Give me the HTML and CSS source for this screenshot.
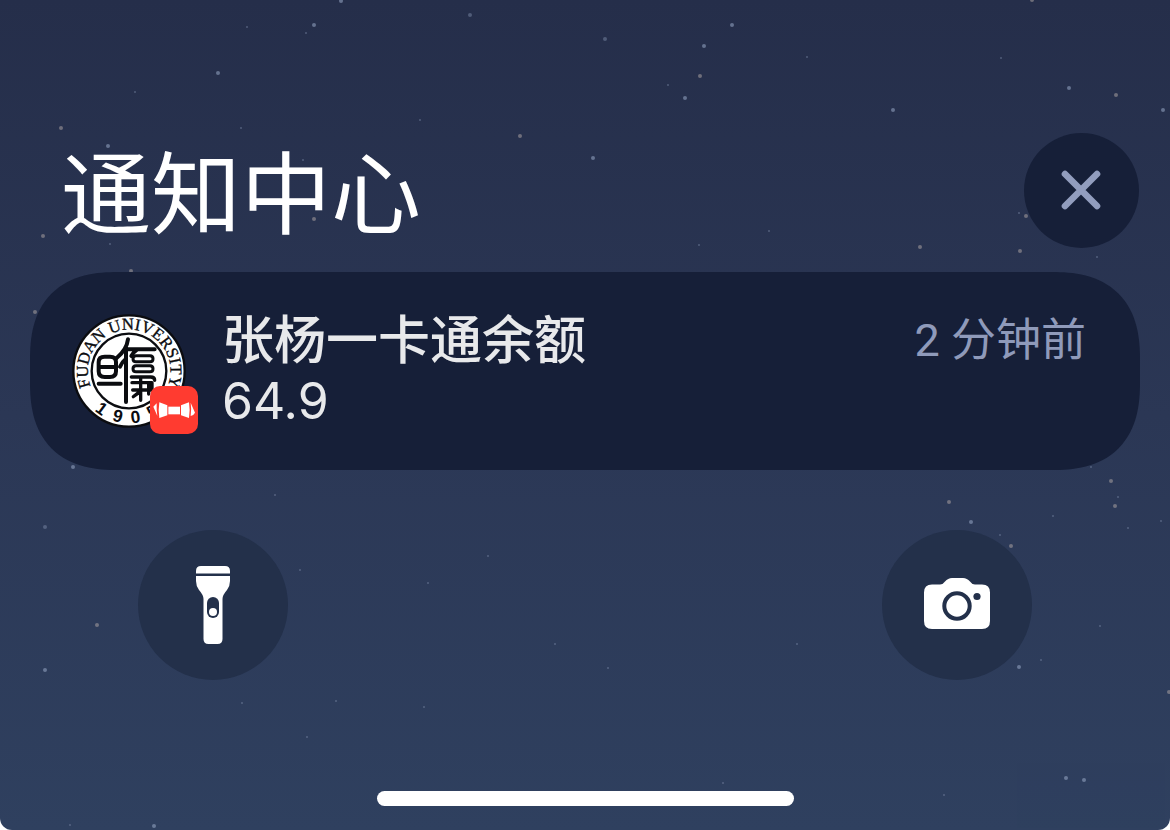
FILE: index.html
```html
<!DOCTYPE html>
<html lang="zh-CN">
<head>
<meta charset="utf-8">
<meta name="viewport" content="width=device-width, initial-scale=1">
<title>通知中心</title>
<link rel="stylesheet" href="styles.css">
</head>
<body>
<main class="screen">
  <svg class="stars" viewBox="0 0 1170 830" preserveAspectRatio="xMidYMid slice" aria-hidden="true">
    <g class="stars-bright">
      <circle cx="314" cy="25" r="2"/><circle cx="341" cy="1" r="2"/><circle cx="218" cy="73" r="2"/><circle cx="108" cy="146" r="2"/>
      <circle cx="732" cy="25" r="2"/><circle cx="704" cy="46" r="2"/><circle cx="685" cy="98" r="2"/><circle cx="893" cy="110" r="2"/>
      <circle cx="1069" cy="88" r="2"/><circle cx="593" cy="158" r="2"/><circle cx="1163" cy="110" r="2"/><circle cx="73" cy="467" r="2"/>
      <circle cx="1019" cy="667" r="2"/><circle cx="1066" cy="778" r="2"/><circle cx="1084" cy="780" r="2"/><circle cx="45" cy="670" r="2"/>
      <circle cx="154" cy="826" r="2"/><circle cx="971" cy="522" r="2"/>
    </g>
    <g class="stars-warm">
      <circle cx="43" cy="236" r="2"/><circle cx="61" cy="128" r="2"/><circle cx="314" cy="219" r="2"/><circle cx="131" cy="271" r="2"/>
      <circle cx="520" cy="136" r="2"/><circle cx="700" cy="76" r="2"/><circle cx="1020" cy="251" r="2"/><circle cx="1026" cy="216" r="2"/>
      <circle cx="920" cy="247" r="2"/><circle cx="35" cy="312" r="2"/><circle cx="949" cy="502" r="2"/><circle cx="1111" cy="481" r="2"/>
      <circle cx="1115" cy="506" r="2"/><circle cx="1011" cy="546" r="2"/><circle cx="97" cy="625" r="2"/><circle cx="1116" cy="95" r="2"/>
      <circle cx="1169" cy="692" r="2"/><circle cx="1032" cy="0" r="2"/>
    </g>
    <g class="stars-dim">
      <circle cx="247" cy="27" r="1"/><circle cx="306" cy="33" r="1"/><circle cx="135" cy="92" r="1"/><circle cx="241" cy="128" r="1"/>
      <circle cx="303" cy="160" r="1"/><circle cx="110" cy="244" r="1"/><circle cx="470" cy="15" r="2"/><circle cx="605" cy="39" r="2"/>
      <circle cx="668" cy="85" r="1"/><circle cx="420" cy="120" r="1"/><circle cx="769" cy="231" r="1"/><circle cx="699" cy="245" r="1"/>
      <circle cx="807" cy="57" r="1"/><circle cx="1001" cy="58" r="1"/><circle cx="1019" cy="213" r="1"/><circle cx="1097" cy="257" r="1"/>
      <circle cx="275" cy="495" r="1"/><circle cx="45" cy="527" r="2"/><circle cx="300" cy="570" r="1"/><circle cx="242" cy="703" r="1"/>
      <circle cx="336" cy="701" r="1"/><circle cx="307" cy="737" r="1"/><circle cx="70" cy="825" r="1"/><circle cx="488" cy="556" r="1"/>
      <circle cx="428" cy="583" r="1"/><circle cx="555" cy="644" r="1"/><circle cx="608" cy="668" r="1"/><circle cx="424" cy="707" r="1"/>
      <circle cx="723" cy="783" r="1"/><circle cx="797" cy="644" r="1"/><circle cx="944" cy="795" r="1"/><circle cx="1041" cy="660" r="1"/>
      <circle cx="1100" cy="626" r="1"/><circle cx="1053" cy="516" r="1"/><circle cx="1128" cy="528" r="1"/><circle cx="1161" cy="521" r="1"/>
      <circle cx="1000" cy="535" r="1"/><circle cx="1118" cy="497" r="1"/><circle cx="1091" cy="467" r="1"/>
    </g>
  </svg>

  <header class="header">
    <h1 class="heading">通知中心</h1>
    <button class="close" type="button" aria-label="关闭">
      <svg width="41" height="41" viewBox="0 0 41 41" aria-hidden="true">
        <path d="M4 4 36 36M36 4 4 36" fill="none" stroke="currentColor" stroke-width="6.6" stroke-linecap="round"/>
      </svg>
    </button>
  </header>

  <article class="card">
    <div class="avatar">
      <svg class="seal" viewBox="0 0 342 342" role="img" aria-label="Fudan University 1905">
        <defs>
          <path id="ring" d="M171 295A124 124 0 1 1 172 295"/>
        </defs>
        <circle cx="171" cy="171" r="167" fill="#fff" stroke="#0b0c10" stroke-width="7"/>
        <circle cx="171" cy="171" r="112" fill="none" stroke="#0b0c10" stroke-width="7"/>
        <text class="seal-name" text-anchor="middle"><textPath href="#ring" startOffset="50%">FUDAN UNIVERSITY</textPath></text>
        <g class="seal-year" text-anchor="middle">
          <text x="171" y="328" transform="rotate(36 171 171)">1</text>
          <text x="171" y="328" transform="rotate(14 171 171)">9</text>
          <text x="171" y="328" transform="rotate(-8 171 171)">0</text>
          <text x="171" y="328" transform="rotate(-30 171 171)">5</text>
        </g>
        <g fill="none" stroke="#0b0c10" stroke-width="12" stroke-linecap="round" stroke-linejoin="round">
          <path d="M98 128h16q18 0 18 16v28q0 17-18 17H98q-18 0-18-17v-28q0-16 18-16zM80 159h52M80 209h66"/>
          <path d="M168 76q-4 32-34 56M162 100v164M162 134q-12 10-18 24M164 106h84M196 106q-12 8-18 20"/>
          <path d="M192 125h42q9 0 9 9t-9 9h-42q-9 0-9-9t9-9zM192 155h42q9 0 9 9t-9 9h-42q-9 0-9-9t9-9z" stroke-width="9"/>
          <path d="M178 189h58q12 0 12 10M180 206h60v22h-58M206 189v70M230 206v34M206 226q-8 14-22 22" stroke-width="10"/>
        </g>
      </svg>
      <svg class="badge" viewBox="0 0 144 144" aria-hidden="true">
        <rect width="144" height="144" rx="30" fill="#ff3b30"/>
        <g fill="#fff">
          <path d="M55 62h35v23H55z"/>
          <path d="M28 49 52 58V88L28 96Q24 73 28 49zM10 62 20 52Q19 70 22 90z"/>
          <path d="M117 49 93 58V88L117 96Q121 73 117 49zM122 50 135 80Q132 87 122 90Q125 70 122 50z"/>
        </g>
      </svg>
    </div>
    <div class="content">
      <div class="row">
        <h2 class="title">张杨一卡通余额</h2>
        <time class="time">2 分钟前</time>
      </div>
      <p class="body">64.9</p>
    </div>
  </article>

  <nav class="actions">
    <button class="round" type="button" aria-label="手电筒">
      <svg width="34" height="78" viewBox="0 0 34 78" aria-hidden="true">
        <path fill="#fff" d="M5 0h24q5 0 5 5v2.500H0V5q0-5 5-5zM0 10h34v5q0 5-3 9-4.500 5-4.500 9v40q0 5-5 5h-9q-5 0-5-5V33q0-4-4.500-9-3-4-3-9z"/>
        <rect class="cutout" x="11" y="31" width="12" height="21" rx="6"/>
        <circle cx="17" cy="46" r="4" fill="#fff"/>
      </svg>
    </button>
    <button class="round" type="button" aria-label="相机">
      <svg width="66" height="54" viewBox="0 1 66 54" aria-hidden="true">
        <path fill="#fff" d="M8 7.500h8q3 0 5-3 3-3.500 7-3.500h11q4 0 7 3.500 2 3 5 3h7q8 0 8 8V44q0 8-8 8H8q-8 0-8-8V15.500q0-8 8-8z"/>
        <circle class="lens" cx="33" cy="29" r="12.7"/>
        <circle class="cutout" cx="53" cy="19.500" r="3.600"/>
      </svg>
    </button>
  </nav>

  <div class="home-bar"></div>
</main>
</body>
</html>
```
FILE: styles.css
```css
* {
  box-sizing: border-box;
}

body {
  margin: 0;
  background: #fff;
  font-family: Inter, "Noto Sans CJK SC", sans-serif;
}

h1,
h2,
p {
  margin: 0;
}

button {
  display: grid;
  place-items: center;
  flex: none;
  padding: 0;
  border: 0;
  border-radius: 50%;
  cursor: pointer;
}

.screen {
  position: relative;
  display: flex;
  flex-direction: column;
  min-height: 100vh;
  padding: 133px 30px 24px;
  overflow: hidden;
  border-radius: 0 0 12px 12px;
  background: linear-gradient(#252e4a, #2b3755 50%, #2f405f);
}

.stars {
  position: absolute;
  inset: 0;
  width: 100%;
  height: 100%;
}

.stars-bright {
  fill: #a3b4d2;
  opacity: 0.5;
}

.stars-warm {
  fill: #b5aca8;
  opacity: 0.5;
}

.stars-dim {
  fill: #8493b0;
  opacity: 0.45;
}

.header,
.card,
.actions,
.home-bar {
  position: relative;
}

.header {
  display: flex;
  align-items: flex-end;
  justify-content: space-between;
  padding: 0 1px 0 31px;
}

.heading {
  color: #fff;
  font-size: 90px;
  font-weight: 400;
  line-height: 106px;
}

.close {
  width: 115px;
  height: 115px;
  background: #161f38;
  color: #929dbe;
}

.card {
  display: flex;
  align-items: center;
  gap: 36px;
  min-height: 198px;
  margin-top: 24px;
  padding: 36px 54px 36px 42px;
  border-radius: 72px;
  background: #161f38;
}

@supports (corner-shape: superellipse(1.3)) {
  .card {
    border-radius: 88px;
    corner-shape: superellipse(1.3);
  }
}

.avatar {
  position: relative;
  flex: none;
  width: 114px;
  height: 114px;
}

.seal {
  display: block;
  width: 100%;
}

.seal-name {
  fill: #0b0c10;
  stroke: #0b0c10;
  stroke-width: 1;
  font-family: "Liberation Serif", serif;
  font-size: 50px;
}

.seal-year {
  fill: #0b0c10;
  font-family: "Liberation Sans", sans-serif;
  font-size: 52px;
  font-weight: 700;
}

.badge {
  position: absolute;
  right: -12px;
  bottom: -6px;
  width: 48px;
  height: 48px;
}

.content {
  flex: 1;
  min-width: 0;
}

.row {
  display: flex;
  align-items: flex-start;
  justify-content: space-between;
  gap: 24px;
}

.title,
.body {
  color: #e8e9eb;
  line-height: 60px;
}

.title {
  font-size: 52px;
  font-weight: 500;
}

.body {
  font-size: 50px;
}

.time {
  flex: none;
  color: #8f9aba;
  font-family: Roboto, "Noto Sans CJK SC", sans-serif;
  font-size: 45px;
  line-height: 60px;
}

.actions {
  display: flex;
  justify-content: space-between;
  margin-top: 60px;
  padding: 0 108px;
}

.round {
  width: 150px;
  height: 150px;
  background: #23304a;
}

.cutout {
  fill: #23304a;
}

.lens {
  fill: none;
  stroke: #23304a;
  stroke-width: 4;
}

.home-bar {
  align-self: center;
  width: 417px;
  max-width: 60%;
  height: 15px;
  margin-top: auto;
  border-radius: 8px;
  background: #fff;
}
```
